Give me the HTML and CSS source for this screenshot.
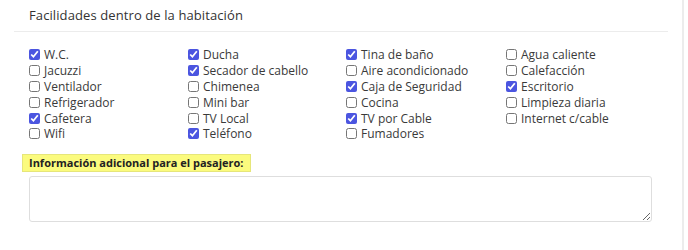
FILE: index.html
```html
<!DOCTYPE html>
<html lang="es">
<head>
    <meta charset="UTF-8">
    <meta name="viewport" content="width=device-width, initial-scale=1.0">
    <title>Facilidades</title>
    <link rel="stylesheet" href="styles.css">
</head>
<body>
    <div class="panel">
        <div class="panel-header">
            <h2>Facilidades dentro de la habitación</h2>
        </div>

        <div class="facilities">
            <label class="item"><input type="checkbox" checked> W.C.</label>
            <label class="item"><input type="checkbox" checked> Ducha</label>
            <label class="item"><input type="checkbox" checked> Tina de baño</label>
            <label class="item"><input type="checkbox"> Agua caliente</label>

            <label class="item"><input type="checkbox"> Jacuzzi</label>
            <label class="item"><input type="checkbox" checked> Secador de cabello</label>
            <label class="item"><input type="checkbox"> Aire acondicionado</label>
            <label class="item"><input type="checkbox"> Calefacción</label>

            <label class="item"><input type="checkbox"> Ventilador</label>
            <label class="item"><input type="checkbox"> Chimenea</label>
            <label class="item"><input type="checkbox" checked> Caja de Seguridad</label>
            <label class="item"><input type="checkbox" checked> Escritorio</label>

            <label class="item"><input type="checkbox"> Refrigerador</label>
            <label class="item"><input type="checkbox"> Mini bar</label>
            <label class="item"><input type="checkbox"> Cocina</label>
            <label class="item"><input type="checkbox"> Limpieza diaria</label>

            <label class="item"><input type="checkbox" checked> Cafetera</label>
            <label class="item"><input type="checkbox"> TV Local</label>
            <label class="item"><input type="checkbox" checked> TV por Cable</label>
            <label class="item"><input type="checkbox"> Internet c/cable</label>

            <label class="item"><input type="checkbox"> Wifi</label>
            <label class="item"><input type="checkbox" checked> Teléfono</label>
            <label class="item"><input type="checkbox"> Fumadores</label>
        </div>

        <div class="extra">
            <label class="highlight" for="info">Información adicional para el pasajero:</label>
            <textarea id="info"></textarea>
        </div>
    </div>
</body>
</html>
```

FILE: styles.css
```css
* {
    box-sizing: border-box;
    margin: 0;
    padding: 0;
}

body {
    background: white;
    font-family: 'Open Sans', 'Noto Sans', sans-serif;
    color: #3a3a3a;
}

.panel {
    width: 684px;
    height: 250px;
    border-right: 2px solid #ececec;
    padding-left: 14px;
}

.panel-header {
    width: 654px;
    height: 32px;
    padding: 6px 0 0 15px;
    border-bottom: 1px solid #ececec;
}

h2 {
    font-size: 13px;
    font-weight: 400;
    color: #333;
    letter-spacing: 0.1px;
}

.facilities {
    display: grid;
    grid-template-columns: 159px 158px 160px 160px;
    grid-auto-rows: 15.8px;
    padding: 15px 0 0 15px;
}

.item {
    display: flex;
    align-items: center;
    gap: 4px;
    font-size: 12px;
    color: #3a3a3a;
    white-space: nowrap;
}

.item input {
    width: 11px;
    height: 11px;
    margin: 0;
    accent-color: #4b55e0;
}

.extra {
    padding: 8px 0 0 8px;
}

.highlight {
    display: inline-block;
    background: #fbfb7e;
    border: 1px solid #e6e67a;
    padding: 0 6px;
    line-height: 16px;
    font-size: 11px;
    font-weight: 700;
    color: #222;
}

textarea {
    display: block;
    width: 623px;
    height: 46px;
    margin: 4px 0 0 7px;
    border: 1px solid #dedede;
    border-radius: 3px;
    resize: vertical;
}
```
